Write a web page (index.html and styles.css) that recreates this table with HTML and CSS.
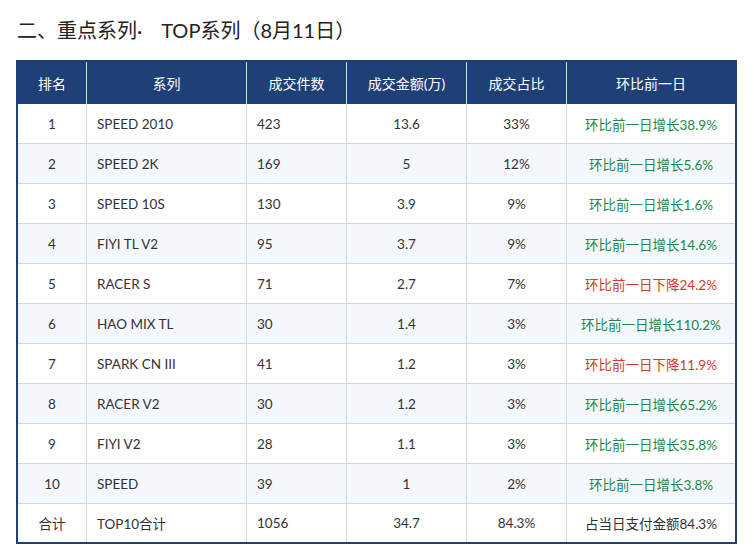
FILE: index.html
```html
<!DOCTYPE html>
<html lang="zh-CN">
<head>
<meta charset="utf-8">
<title>TOP系列</title>
<link rel="stylesheet" href="styles.css">
</head>
<body>
<div class="page">
  <h1 class="title">二、重点系列·<span class="gap"> </span>TOP系列（8月11日）</h1>
  <table class="tbl">
    <colgroup>
      <col class="c1"><col class="c2"><col class="c3"><col class="c4"><col class="c5"><col class="c6">
    </colgroup>
    <thead>
      <tr><th>排名</th><th>系列</th><th>成交件数</th><th>成交金额(万)</th><th>成交占比</th><th>环比前一日</th></tr>
    </thead>
    <tbody>
      <tr><td>1</td><td class="l">SPEED 2010</td><td class="l">423</td><td>13.6</td><td>33%</td><td class="up">环比前一日增长38.9%</td></tr>
      <tr><td>2</td><td class="l">SPEED 2K</td><td class="l">169</td><td>5</td><td>12%</td><td class="up">环比前一日增长5.6%</td></tr>
      <tr><td>3</td><td class="l">SPEED 10S</td><td class="l">130</td><td>3.9</td><td>9%</td><td class="up">环比前一日增长1.6%</td></tr>
      <tr><td>4</td><td class="l">FIYI TL V2</td><td class="l">95</td><td>3.7</td><td>9%</td><td class="up">环比前一日增长14.6%</td></tr>
      <tr><td>5</td><td class="l">RACER S</td><td class="l">71</td><td>2.7</td><td>7%</td><td class="down">环比前一日下降24.2%</td></tr>
      <tr><td>6</td><td class="l">HAO MIX TL</td><td class="l">30</td><td>1.4</td><td>3%</td><td class="up">环比前一日增长110.2%</td></tr>
      <tr><td>7</td><td class="l">SPARK CN III</td><td class="l">41</td><td>1.2</td><td>3%</td><td class="down">环比前一日下降11.9%</td></tr>
      <tr><td>8</td><td class="l">RACER V2</td><td class="l">30</td><td>1.2</td><td>3%</td><td class="up">环比前一日增长65.2%</td></tr>
      <tr><td>9</td><td class="l">FIYI V2</td><td class="l">28</td><td>1.1</td><td>3%</td><td class="up">环比前一日增长35.8%</td></tr>
      <tr><td>10</td><td class="l">SPEED</td><td class="l">39</td><td>1</td><td>2%</td><td class="up">环比前一日增长3.8%</td></tr>
      <tr class="total"><td>合计</td><td class="l">TOP10合计</td><td class="l">1056</td><td>34.7</td><td>84.3%</td><td>占当日支付金额84.3%</td></tr>
    </tbody>
  </table>
</div>
</body>
</html>
```

FILE: styles.css
```css
html, body {
  margin: 0;
  padding: 0;
  background: #ffffff;
}
body {
  font-family: "Lato", "Noto Sans CJK SC", sans-serif;
  color: #333333;
}
.page {
  padding: 14px 17px 0 16px;
}
.title {
  margin: 0 0 0 1px;
  font-size: 20px;
  font-weight: normal;
  line-height: 32px;
  height: 32px;
  color: #222222;
  white-space: nowrap;
}
.title .gap {
  display: inline-block;
  width: 19px;
}
.tbl {
  margin-top: 14px;
  width: 721px;
  border-collapse: separate;
  border-spacing: 0;
  table-layout: fixed;
  border: 2px solid #1f3f77;
  font-size: 13.5px;
}
.c1 { width: 69px; }
.c2 { width: 160px; }
.c3 { width: 100px; }
.c4 { width: 120px; }
.c5 { width: 100px; }
.c6 { width: 168px; }
.tbl th {
  background: #1f3f77;
  color: #ffffff;
  font-weight: normal;
  height: 42px;
  padding: 0;
  font-size: 14px;
  border-right: 1px solid #d6dce6;
  text-align: center;
}
.tbl th:last-child,
.tbl td:last-child { border-right: none; }
.tbl td {
  height: 39px;
  padding: 0;
  text-align: center;
  border-right: 1px solid #d3d8de;
  border-bottom: 1px solid #d3d8de;
  color: #333333;
}
.tbl tr.total td {
  height: 38px;
  border-bottom: none;
}
.tbl td.l {
  text-align: left;
  padding-left: 10px;
}
.tbl tbody tr:nth-child(even) td {
  background: #f4f7fc;
}
.tbl td.up { color: #23884b; }
.tbl td.down { color: #d33a30; }
```
